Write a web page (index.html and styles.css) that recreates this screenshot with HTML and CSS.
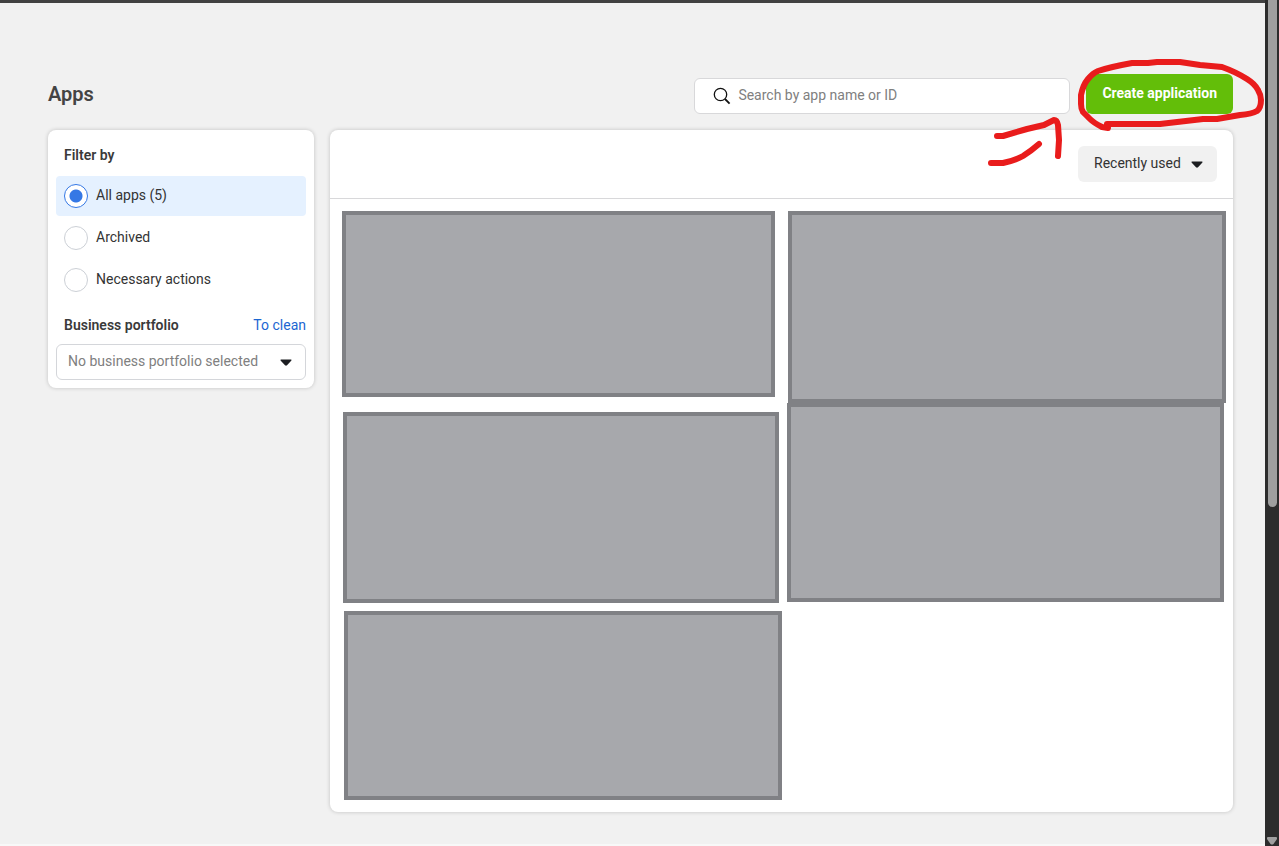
FILE: index.html
```html
<!DOCTYPE html>
<html lang="en">
<head>
<meta charset="utf-8">
<title>Apps</title>
<link rel="stylesheet" href="styles.css">
</head>
<body>
<div class="viewport">
  <main class="page">
    <header class="toolbar">
      <h1 class="title">Apps</h1>
      <label class="search">
        <svg class="search-icon" viewBox="0 0 18 18" aria-hidden="true"><circle cx="7.5" cy="7.5" r="6.2"/><path d="M12 12l4.600 4.600" stroke-width="1.800"/></svg>
        <input class="search-input" type="search" aria-label="Search apps" placeholder="Search by app name or ID">
      </label>
      <div class="create">
        <button class="create-button" type="button">Create application</button>
        <svg class="marker" viewBox="0 0 290 120" aria-hidden="true">
          <path d="M128 70L122 69Q114 65 110 61L103 54Q101 51 101 46V37Q103 27 108 21Q113 15 118 13Q130 9 152 5H168L177 4H200L220 7L242 9Q256 14 267 21Q275 26 278 32Q281 37 281 42Q281 50 277 53Q272 56 260 57L237 61H223L180 66H127"/>
          <path d="M17 78H23L47 71L64 67L74 62Q77 62 78 67L79 82L78 98"/>
          <path d="M11 105H23Q36 102 43 98Q51 93 59 86"/>
        </svg>
      </div>
    </header>
    <div class="columns">
      <aside class="card filters">
        <fieldset class="options">
          <legend class="heading">Filter by</legend>
          <label class="option"><input type="radio" name="filter" checked><span>All apps (5)</span></label>
          <label class="option"><input type="radio" name="filter"><span>Archived</span></label>
          <label class="option"><input type="radio" name="filter"><span>Necessary actions</span></label>
        </fieldset>
        <div class="portfolio-row">
          <label class="heading" for="portfolio">Business portfolio</label>
          <a class="clear" href="#">To clean</a>
        </div>
        <div class="dropdown">
          <select class="portfolio" id="portfolio"><option>No business portfolio selected</option></select>
          <svg class="caret" viewBox="0 0 12 7" aria-hidden="true"><path d="M1 .5h10q1 .3.2 1.300L7 6.300q-1 .8-2 0L.8 1.800Q0 .8 1 .5z"/></svg>
        </div>
      </aside>
      <section class="card apps">
        <div class="apps-head">
          <div class="dropdown">
            <select class="sort" aria-label="Sort apps"><option>Recently used</option></select>
            <svg class="caret" viewBox="0 0 12 7" aria-hidden="true"><path d="M1 .5h10q1 .3.2 1.300L7 6.300q-1 .8-2 0L.8 1.800Q0 .8 1 .5z"/></svg>
          </div>
        </div>
        <div class="apps-body">
          <div class="stack">
            <div class="cover cover-a"></div>
            <div class="cover cover-b"></div>
            <div class="cover cover-c"></div>
          </div>
          <div class="stack">
            <div class="cover cover-d"></div>
            <div class="cover cover-e"></div>
          </div>
        </div>
      </section>
    </div>
  </main>
  <div class="scrollbar" aria-hidden="true">
    <div class="thumb"></div>
    <svg class="scroll-arrow" viewBox="0 0 10 8"><path d="M1 0h8q1 0 1 1v1L6.500 7q-1.500 1-3 0L0 2V1q0-1 1-1z"/></svg>
  </div>
</div>
</body>
</html>
```
FILE: styles.css
```css
* { box-sizing: border-box; }
body {
  margin: 0;
  background: #f1f1f1;
  color: #333;
  font: 14px/20px Roboto, "Liberation Sans", sans-serif;
}
input, select, button { font: inherit; }
.viewport { display: flex; min-height: 100vh; }
.page {
  flex: 1;
  min-width: 0;
  padding: 71px 32px 32px 48px;
  border-top: 3px solid #414141;
  border-bottom: 2px solid #f8f8f8;
}
.toolbar { display: flex; align-items: flex-end; gap: 16px; margin-bottom: 16px; }
.title { flex: 1; margin: 0; font-size: 20px; line-height: 40px; font-weight: 600; color: #444; }
.search {
  display: flex;
  align-items: center;
  gap: 7px;
  width: 376px;
  height: 36px;
  padding: 0 18px;
  background: #fff;
  border: 1px solid #d8d8da;
  border-radius: 6px;
}
.search-icon { width: 18px; height: 18px; fill: none; stroke: #111; stroke-width: 1.3; }
.search-input { flex: 1; min-width: 0; padding: 0 0 2px; border: 0; outline: 0; background: none; }
.search-input::placeholder { color: #808080; opacity: 1; }
.create { position: relative; }
.create-button {
  display: block;
  height: 40px;
  padding: 0 16px 2px;
  border: 0;
  border-radius: 6px;
  background: #63be09;
  color: #fff;
  font-weight: 700;
}
.marker {
  position: absolute;
  top: -16px;
  right: -37px;
  width: 290px;
  height: 120px;
  fill: none;
  stroke: #e91c1c;
  stroke-width: 6;
  stroke-linecap: round;
  stroke-linejoin: round;
  pointer-events: none;
}
.columns { display: flex; align-items: flex-start; gap: 16px; }
.card { background: #fff; border-radius: 8px; box-shadow: 0 0 4px rgba(0, 0, 0, .2); }
.filters { width: 266px; padding: 8px; }
.options { display: grid; gap: 2px; margin: 0; padding: 0; border: 0; }
.heading { padding: 0 8px; font-weight: 600; color: #3a3a3a; }
legend.heading { padding: 7px 8px 11px; }
.option { display: flex; align-items: center; gap: 8px; height: 40px; padding: 0 8px; border-radius: 4px; }
.option span { padding-bottom: 2px; }
.option:has(:checked) { background: #e5f1ff; }
.option input {
  appearance: none;
  width: 24px;
  height: 24px;
  margin: 0;
  border: 1px solid #ccd0d6;
  border-radius: 50%;
  background: #fff;
}
.option input:checked { border-color: #3578e5; background: radial-gradient(circle, #3578e5 6px, #fff 7px); }
.portfolio-row { display: flex; justify-content: space-between; margin: 15px 0 9px; }
.clear { color: #1b66d2; text-decoration: none; }
.dropdown { position: relative; }
select { appearance: none; display: block; height: 36px; border-radius: 6px; color: #333; outline: 0; }
.portfolio { width: 100%; padding: 0 36px 2px 11px; border: 1px solid #d4d6da; background: #fff; color: #808080; }
.sort { padding: 0 36px 2px 16px; border: 0; background: #f1f1f1; }
.caret { position: absolute; right: 14px; top: 15px; width: 12px; height: 7px; fill: #1c1e21; pointer-events: none; }
.apps { flex: 1; min-width: 0; }
.apps-head { display: flex; justify-content: flex-end; padding: 16px; border-bottom: 1px solid #d8d8da; }
.apps-body { display: flex; gap: 4px; padding: 12px 7px 12px 12px; }
.stack { flex: 1; }
.cover { border: 4px solid #808185; background: #a7a8ac; }
.cover-a { height: 186px; margin: 0 7px 15px 0; }
.cover-b { height: 191px; margin: 0 3px 8px 1px; }
.cover-c { height: 189px; margin: 0 0 0 2px; }
.cover-d { height: 192px; margin-left: 2px; }
.cover-e { height: 199px; margin: 0 2px 0 1px; }
.scrollbar {
  display: flex;
  flex-direction: column;
  align-items: center;
  justify-content: space-between;
  width: 14px;
  padding-bottom: 1px;
  background: #2c2c2c;
}
.thumb { width: 9px; height: 507px; border-radius: 0 0 5px 5px; background: #9f9f9f; }
.scroll-arrow { width: 10px; height: 8px; fill: #9f9f9f; }
```
